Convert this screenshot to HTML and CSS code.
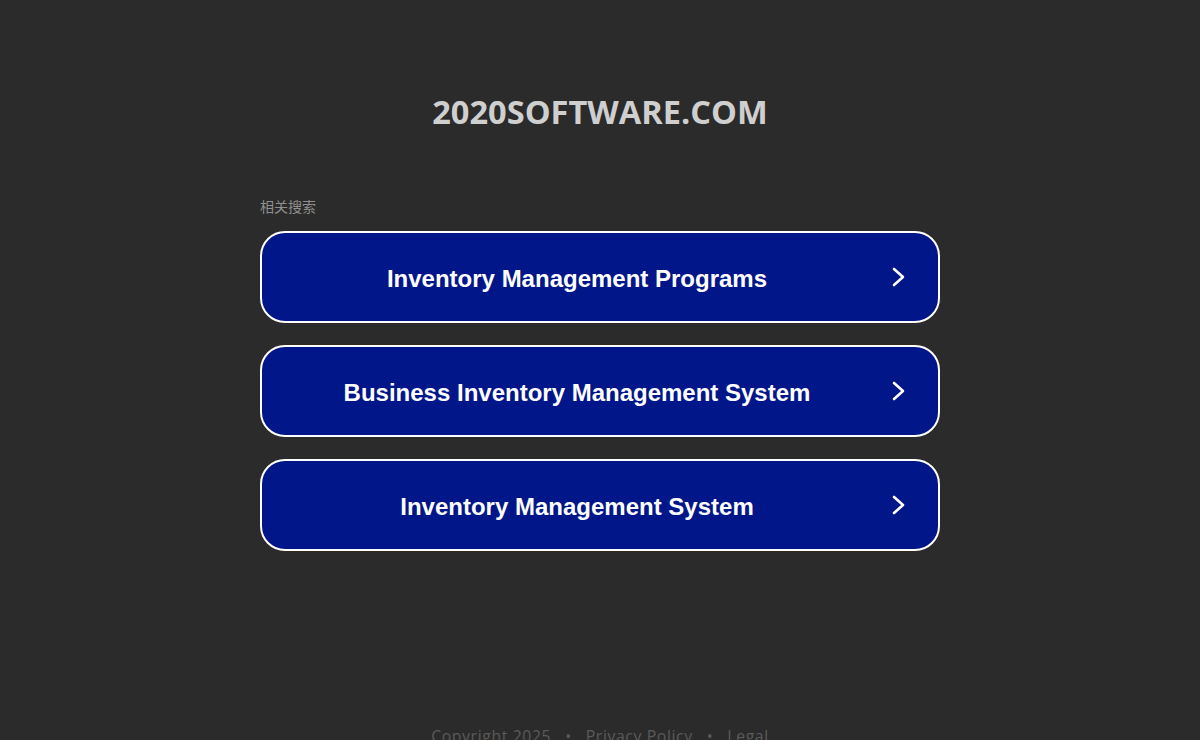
FILE: index.html
```html
<!DOCTYPE html>
<html lang="en">
<head>
<meta charset="utf-8">
<title>2020software.com</title>
<link rel="stylesheet" href="styles.css">
</head>
<body>
<div class="page">
  <header class="header">
    <h1 class="domain">2020SOFTWARE.COM</h1>
  </header>
  <main class="content">
    <div class="label">相关搜索</div>
    <ul class="links">
      <li><a class="link" href="#"><span class="link-text">Inventory Management Programs</span><svg class="chev" viewBox="0 0 14 20" width="14" height="20"><path d="M2 2 L11 10 L2 18" fill="none" stroke="#fff" stroke-width="2.6" stroke-linecap="round" stroke-linejoin="round"/></svg></a></li>
      <li><a class="link" href="#"><span class="link-text">Business Inventory Management System</span><svg class="chev" viewBox="0 0 14 20" width="14" height="20"><path d="M2 2 L11 10 L2 18" fill="none" stroke="#fff" stroke-width="2.6" stroke-linecap="round" stroke-linejoin="round"/></svg></a></li>
      <li><a class="link" href="#"><span class="link-text">Inventory Management System</span><svg class="chev" viewBox="0 0 14 20" width="14" height="20"><path d="M2 2 L11 10 L2 18" fill="none" stroke="#fff" stroke-width="2.6" stroke-linecap="round" stroke-linejoin="round"/></svg></a></li>
    </ul>
  </main>
  <footer class="footer">
    <span>Copyright 2025</span><span class="dot">•</span><a href="#">Privacy Policy</a><span class="dot">•</span><a href="#">Legal</a>
  </footer>
</div>
</body>
</html>
```
FILE: styles.css
```css
html, body {
  margin: 0;
  padding: 0;
  background: #2b2b2b;
  height: 100%;
  overflow: hidden;
}
.page {
  display: flex;
  flex-direction: column;
  align-items: center;
  font-family: "Open Sans", "Liberation Sans", sans-serif;
}
.header {
  padding-top: 90px;
  height: 109px;
  box-sizing: border-box;
  display: flex;
  justify-content: center;
}
.domain {
  margin: 0;
  font-size: 32.6px;
  font-weight: 700;
  color: #cfcfcf;
  line-height: 44px;
  letter-spacing: 0;
}
.content {
  width: 680px;
  margin-top: 88px;
}
.label {
  font-family: "Noto Sans CJK SC", "Open Sans", sans-serif;
  font-size: 14px;
  color: #8f8f8f;
  line-height: 18px;
  margin-bottom: 16px;
}
.links {
  list-style: none;
  margin: 0;
  padding: 0;
  display: flex;
  flex-direction: column;
  gap: 22px;
}
.link {
  display: flex;
  align-items: center;
  height: 92px;
  box-sizing: border-box;
  border: 2px solid #ffffff;
  border-radius: 25px;
  background: #011689;
  text-decoration: none;
  padding: 0 32px 0 0;
}
.link-text {
  flex: 1;
  text-align: center;
  font-family: "Liberation Sans", Arial, sans-serif;
  font-weight: 700;
  font-size: 24px;
  color: #ffffff;
  margin-top: 3px;
}
.chev {
  display: block;
  margin-top: 0;
}
.footer {
  margin-top: 174px;
  font-size: 15.8px;
  color: #5a5a5a;
  letter-spacing: 0.6px;
  display: flex;
  gap: 14px;
}
.footer a {
  color: #5a5a5a;
  text-decoration: none;
}
```
